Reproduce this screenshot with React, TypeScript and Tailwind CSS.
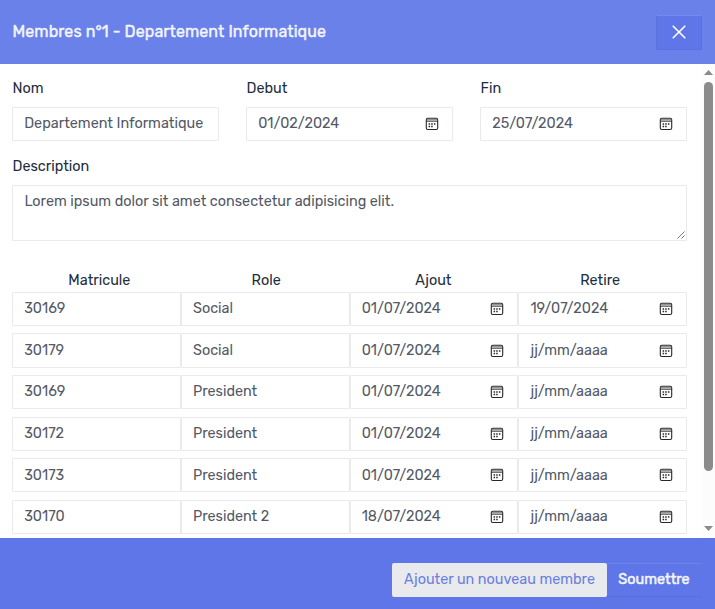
import type { ReactNode } from "react";

const members = [
  ["30169", "Social", "01/07/2024", "19/07/2024"],
  ["30179", "Social", "01/07/2024", "jj/mm/aaaa"],
  ["30169", "President", "01/07/2024", "jj/mm/aaaa"],
  ["30172", "President", "01/07/2024", "jj/mm/aaaa"],
  ["30173", "President", "01/07/2024", "jj/mm/aaaa"],
  ["30170", "President 2", "18/07/2024", "jj/mm/aaaa"],
];

function CalendarIcon() {
  return (
    <svg width="14" height="14" viewBox="0 0 14 14" className="shrink-0" fill="none">
      <rect x="1.3" y="1.3" width="11.4" height="11.2" rx="1.5" stroke="#25272b" strokeWidth="1.1" />
      <path d="M1.8 2.8h10.4" stroke="#8a8a8a" strokeWidth="1.4" />
      <path d="M1.3 4.3h11.4" stroke="#25272b" strokeWidth="0.8" />
      <path
        d="M6.2 6.2h1.5v1.5H6.2zM8.9 6.2h1.5v1.5H8.9zM3.6 6.2h1.5v1.5H3.6zM3.6 8.8h1.5v1.5H3.6zM6.2 8.8h1.5v1.5H6.2z"
        fill="#25272b"
      />
    </svg>
  );
}

function Box({ value, date = false }: { value: string; date?: boolean }) {
  return (
    <div className="flex h-[34.2px] min-w-0 flex-1 items-center justify-between rounded-[1px] border border-[#e8eaeb] pt-[0.4px] pr-[13px] pl-[11.2px] whitespace-nowrap text-[#545966]">
      <span>{value}</span>
      {date && <CalendarIcon />}
    </div>
  );
}

function Field({ label, children }: { label: string; children: ReactNode }) {
  return (
    <div className="flex min-w-0 flex-1 flex-col gap-[7px]">
      <div className="h-[22px] pl-[0.5px] leading-[22px]">{label}</div>
      <div className="flex">{children}</div>
    </div>
  );
}

function Scrollbar() {
  return (
    <div className="flex w-[13px] shrink-0 flex-col items-center bg-[#fcfcfc] pt-[6px] pr-px pb-[7px]">
      <svg width="9" height="5" viewBox="0 0 9 5" className="shrink-0" fill="#8b8b8b">
        <path d="M4.5 0 9 5H0z" />
      </svg>
      <div className="mt-[7px] h-[389px] w-[9px] shrink-0 rounded-full bg-[#8b8b8b]" />
      <svg width="9" height="5" viewBox="0 0 9 5" className="mt-auto shrink-0" fill="#8b8b8b">
        <path d="M0 0h9L4.5 5z" />
      </svg>
    </div>
  );
}

export default function App() {
  return (
    <div className="flex h-[609px] w-[715px] flex-col overflow-hidden bg-white font-['Rubik','Roboto',sans-serif] text-[14.4px] text-[#1d2e40]">
      <header className="flex h-16 shrink-0 items-center justify-between bg-[#6a81ea] pr-[13px] pl-[12.5px]">
        <h1 className="text-base tracking-[0.1px] text-[#f3f5fd] [-webkit-text-stroke:0.4px_#f3f5fd]">
          Membres n°1 - Departement Informatique
        </h1>
        <button className="flex h-[35px] w-[46px] items-center justify-center border border-[#5a72e0] border-t-[#748af0] bg-[#5e76e7]">
          <svg width="14" height="14" viewBox="0 0 14 14" stroke="white" strokeWidth="1.6" strokeLinecap="round">
            <path d="M1.2 1.2l11.6 11.6M12.8 1.2L1.2 12.8" />
          </svg>
        </button>
      </header>

      <div className="flex h-[474px] shrink-0">
        <main className="flex min-w-0 flex-1 flex-col overflow-hidden pt-[14px] pr-[15px] pl-3">
          <div className="flex gap-[27px]">
            <Field label="Nom">
              <Box value="Departement Informatique" />
            </Field>
            <Field label="Debut">
              <Box value="01/02/2024" date />
            </Field>
            <Field label="Fin">
              <Box value="25/07/2024" date />
            </Field>
          </div>
          <div className="mt-[14.8px] flex">
            <Field label="Description">
              <div className="flex h-14 flex-1 items-end justify-between rounded-[1px] border border-[#e8eaeb] pl-[11.4px] text-[#545966]">
                <span className="self-start pt-[5px] leading-[22px]">
                  Lorem ipsum dolor sit amet consectetur adipisicing elit.
                </span>
                <svg width="8" height="8" viewBox="0 0 8 8" className="m-px" stroke="#555" strokeWidth="0.8">
                  <path d="M0.5 7.5l7-7M4.5 7.5l3-3" />
                </svg>
              </div>
            </Field>
          </div>
          <div className="mt-[27.8px] grid grid-cols-4 text-center leading-[23px]">
            <span className="pl-[6px]">Matricule</span>
            <span className="pl-[2px]">Role</span>
            <span className="pr-px">Ajout</span>
            <span className="pr-[5px]">Retire</span>
          </div>
          <div className="flex flex-col gap-[7.4px]">
            {members.map((row) => (
              <div key={row[0] + row[1]} className="flex">
                {row.map((value, i) => (
                  <Box key={i} value={value} date={i > 1} />
                ))}
              </div>
            ))}
          </div>
        </main>
        <Scrollbar />
      </div>

      <footer className="flex flex-1 items-start justify-end bg-[#5e76e7] pt-[25px] pr-[14px]">
        <button className="h-[34px] w-[215px] rounded-[2px] bg-[#e8eaed] pb-px whitespace-nowrap text-[#6a80df]">
          Ajouter un nouveau membre
        </button>
        <button className="h-[34px] w-[94px] border-y border-t-[#6d83e9] border-b-[#5870df] pb-px text-[#f3f5fd] [-webkit-text-stroke:0.5px_#f3f5fd]">
          Soumettre
        </button>
      </footer>
    </div>
  );
}
